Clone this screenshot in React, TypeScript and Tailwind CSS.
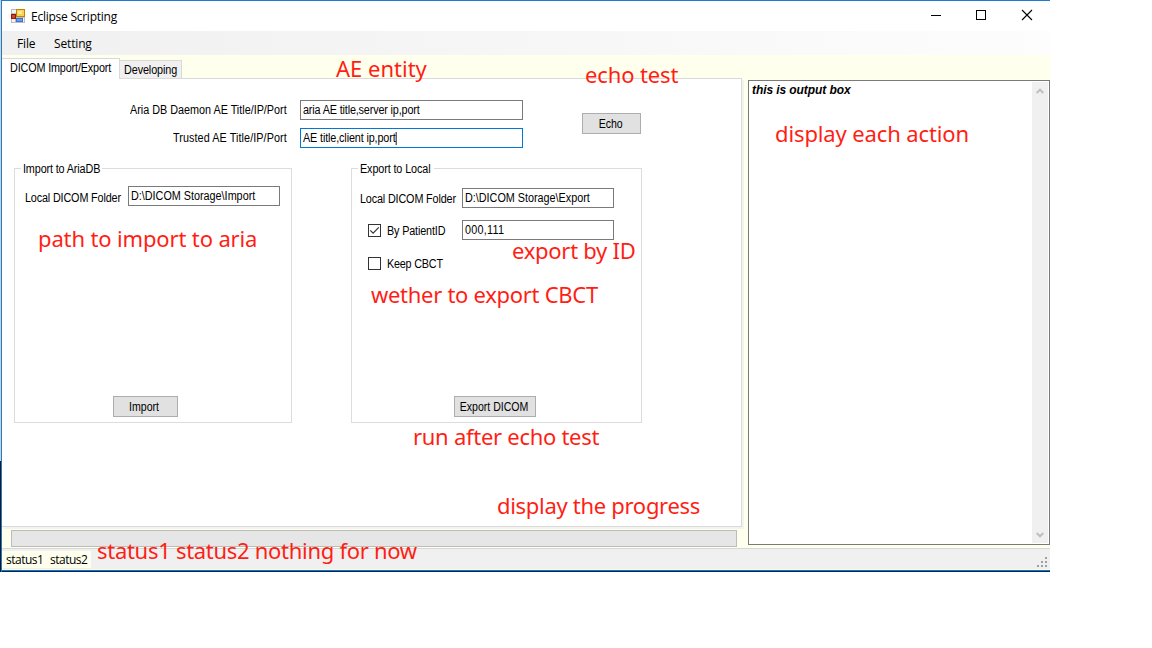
import type { ReactNode } from "react";

const ui = "inline-block origin-left scale-x-90 whitespace-pre text-[12px] leading-[14px]";

function Field({ value, className, focused = false }: { value: string; className: string; focused?: boolean }) {
  return (
    <div className={`flex h-5 shrink-0 items-center border bg-white pl-[2px] ${focused ? "border-[#0078d7]" : "border-[#7a7a7a]"} ${className}`}>
      <span className={ui}>
        {value}
        {focused && <i className="inline-block h-[13px] w-[1.2px] bg-black align-middle" />}
      </span>
    </div>
  );
}

function Button({ className, children }: { className: string; children: ReactNode }) {
  return (
    <button className={`flex h-[21px] shrink-0 items-center justify-center border border-[#adadad] bg-[#e1e1e1] pr-[2px] ${className}`}>
      <span className="inline-block scale-x-[0.88] whitespace-pre text-[12px] leading-[14px]">{children}</span>
    </button>
  );
}

function Check({ checked = false }: { checked?: boolean }) {
  return (
    <div className="h-[13px] w-[13px] shrink-0 border border-[#333] bg-white">
      {checked && (
        <svg width="11" height="11" viewBox="0 0 11 11" fill="none" stroke="#333" strokeWidth="1.2">
          <path d="M1.3 5.3 4.1 8.1 9.8 2.4" />
        </svg>
      )}
    </div>
  );
}

function Note({ className, children }: { className: string; children: ReactNode }) {
  return (
    <span className={`absolute whitespace-pre font-['Noto_Sans',sans-serif] text-[22px] leading-[30px] text-[#ff1e14] ${className}`}>
      {children}
    </span>
  );
}

function TitleBar() {
  return (
    <header className="flex h-[30px] shrink-0 items-center bg-white font-['Open_Sans',sans-serif] text-[12px]">
      <svg className="ml-[9px] shrink-0" width="14" height="14" viewBox="0 0 14 14">
        <rect width="14" height="14" fill="#bdbdbd" />
        <path d="M1 1h4v3H1zM1 10h3v3H1zM12 9h1v4h-1z" fill="#f4f4f4" />
        <rect x="5.500" y="0.500" width="8" height="7" fill="#ffd04a" stroke="#b8860b" />
        <rect x="7" y="2" width="4" height="3" fill="#ffe9a0" />
        <rect x="0.500" y="5.500" width="4" height="4" fill="#d4422a" stroke="#8e1b10" />
        <rect x="5.500" y="9.500" width="6" height="3" fill="#6e9ff0" stroke="#3b6fd0" />
      </svg>
      <span className="mt-px ml-[6px] flex-1 tracking-[-0.25px]">Eclipse Scripting</span>
      <svg width="120" height="30" viewBox="0 0 120 30" fill="none" stroke="#000" shapeRendering="crispEdges">
        <path d="M1 14.500h10" />
        <rect x="46.500" y="9.500" width="9" height="9" />
        <path d="M92 9l10 10M102 9 92 19" shapeRendering="auto" strokeWidth="1.1" />
      </svg>
    </header>
  );
}

function ImportGroup() {
  return (
    <section className="flex h-[255px] w-[278px] flex-col border border-[#dcdcdc]">
      <h2 className="-mt-[7px] ml-[6px] h-[14px] w-[81px] bg-white pl-[2px] leading-[14px]">
        <span className={`${ui} tracking-[-0.14px]`}>Import to AriaDB</span>
      </h2>
      <div className="mt-[10px] flex">
        <label className="ml-[10px] w-[103px] pt-[5px] leading-[14px]">
          <span className={`${ui} tracking-[-0.16px]`}>Local DICOM Folder</span>
        </label>
        <Field value="D:\DICOM Storage\Import" className="w-[152px]" />
      </div>
      <Button className="mt-auto mb-[5px] ml-[98px] w-[65px]">Import</Button>
    </section>
  );
}

function ExportGroup() {
  return (
    <section className="ml-[59px] flex h-[255px] w-[291px] flex-col border border-[#dcdcdc]">
      <h2 className="-mt-[7px] ml-[6px] h-[14px] w-[76px] bg-white pl-[2px] leading-[14px]">
        <span className={`${ui} tracking-[-0.12px]`}>Export to Local</span>
      </h2>
      <div className="mt-[12px] flex">
        <label className="ml-[8px] w-[102px] pt-[4px] leading-[14px]">
          <span className={`${ui} tracking-[-0.16px]`}>Local DICOM Folder</span>
        </label>
        <Field value="D:\DICOM Storage\Export" className="w-[152px]" />
      </div>
      <div className="mt-3 flex items-center pl-4">
        <Check checked />
        <label className="ml-[6px] w-[75px] pt-px leading-[14px]">
          <span className={`${ui} tracking-[-0.16px]`}>By PatientID</span>
        </label>
        <Field value="000,111" className="w-[152px] tracking-[0.3px]" />
      </div>
      <div className="mt-[16px] flex h-[14px] items-center pl-4">
        <Check />
        <label className="ml-[6px] pt-px leading-[14px]">
          <span className={`${ui} tracking-[-0.22px]`}>Keep CBCT</span>
        </label>
      </div>
      <Button className="mt-auto mb-[5px] ml-[102px] w-[82px]">Export DICOM</Button>
    </section>
  );
}

function Tabs() {
  return (
    <div className="flex w-[742px] shrink-0 flex-col">
      <div className="z-10 -mb-px flex h-[24px] shrink-0 items-end">
        <div className="mt-[3px] h-[21px] w-[118px] border-t border-r border-[#d9d9d9] bg-white pt-[2px] pl-[8px] leading-[14px]">
          <span className={`${ui} tracking-[-0.16px]`}>DICOM Import/Export</span>
        </div>
        <div className="h-[19px] w-[62px] border-t border-r border-b border-[#d9d9d9] bg-[#f0f0f0] pt-[2px] pl-[4px] leading-[14px]">
          <span className={`${ui} tracking-[-0.1px]`}>Developing</span>
        </div>
      </div>
      <div className="flex h-[449px] w-[740px] shrink-0 flex-col border-t border-r border-b border-[#d9d9d9] bg-white shadow-[2px_2px_0_#f3f3f0]">
        <div className="flex h-[89px] shrink-0">
          <div className="flex w-[521px] flex-col gap-2 pt-[21px]">
            <div className="flex items-center">
              <label className="w-[298px] pl-[128px] leading-[14px]">
                <span className={ui}>Aria DB Daemon AE Title/IP/Port</span>
              </label>
              <Field value="aria AE title,server ip,port" className="w-[223px] tracking-[-0.16px]" />
            </div>
            <div className="flex items-center">
              <label className="w-[298px] pl-[171px] leading-[14px]">
                <span className={`${ui} tracking-[0.09px]`}>Trusted AE Title/IP/Port</span>
              </label>
              <Field value="AE title,client ip,port" className="w-[223px] tracking-[-0.14px]" focused />
            </div>
          </div>
          <Button className="mt-[34px] ml-[59px] w-[59px]">Echo</Button>
        </div>
        <div className="flex pl-3">
          <ImportGroup />
          <ExportGroup />
        </div>
      </div>
      <div className="mt-[3px] ml-[9px] h-[17px] w-[726px] shrink-0 border border-[#bcbcbc] bg-[#e6e6e6]" />
    </div>
  );
}

function OutputBox() {
  return (
    <div className="mt-[25px] ml-[4px] flex h-[465px] w-[302px] shrink-0 justify-between border border-[#7a7a7a] bg-white p-px">
      <p className="pt-[1px] pl-[2px] text-[12px] leading-[14px] font-bold tracking-[-0.08px] italic">this is output box</p>
      <div className="flex h-full w-4 flex-col items-center justify-between bg-[#f0f0f0] py-[5px] pr-px">
        <svg width="8" height="8" viewBox="0 0 8 8" fill="none" stroke="#bfbfbf" strokeWidth="2">
          <path d="M.7 6 4 2.700 7.300 6" />
        </svg>
        <svg width="8" height="8" viewBox="0 0 8 8" fill="none" stroke="#bfbfbf" strokeWidth="2">
          <path d="M.7 3 4 6.300 7.300 3" />
        </svg>
      </div>
    </div>
  );
}

export default function App() {
  return (
    <main className="relative h-[648px] w-[1152px] overflow-hidden bg-white font-['Liberation_Sans',sans-serif] text-[12px] text-black">
      <div className="flex h-[572px] w-[1050px]">
        <div className="flex w-px shrink-0 flex-col">
          <div className="h-[461px] bg-[#d0d0d0]" />
          <div className="flex-1 bg-[#151515]" />
        </div>
        <div className="flex w-[1049px] flex-col border-t border-l border-[#1a7bd0]">
          <TitleBar />
          <nav className="flex h-6 shrink-0 items-center bg-linear-to-r from-[#f0f0f0] to-[#fdfdfd] pt-px font-['Open_Sans',sans-serif] text-[12px] tracking-[-0.15px]">
            <span className="w-[37px] pl-[15px]">File</span>
            <span className="ml-[15px]">Setting</span>
          </nav>
          <div className="flex h-[493px] shrink-0 bg-[#ffffee]">
            <Tabs />
            <OutputBox />
          </div>
          <footer className="flex h-[22px] shrink-0 items-start justify-between border-t border-b border-t-[#d7d7d7] border-b-[#fafae8] bg-[#f0f0f0] font-['Open_Sans',sans-serif] text-[12px] tracking-[-0.5px]">
            <div className="mt-[2px] flex h-[17px] w-[89px] items-center bg-[#ffffee] pl-[4px]">
              <span className="w-[44px]">status1</span>
              <span>status2</span>
            </div>
            <svg className="mt-[8px] mr-[2px]" width="11" height="11" fill="#a0a0a0">
              <path d="M8 0h2v2H8zM4 4h2v2H4zM8 4h2v2H8zM0 8h2v2H0zM4 8h2v2H4zM8 8h2v2H8z" />
            </svg>
          </footer>
          <div className="h-px shrink-0 bg-[#0078d7]" />
          <div className="h-px shrink-0 bg-[#10243a]" />
        </div>
      </div>
      <Note className="top-[53px] left-[336px]">AE entity</Note>
      <Note className="top-[59px] left-[585px] tracking-[-0.12px]">echo test</Note>
      <Note className="top-[118px] left-[775px] tracking-[-0.12px]">display each action</Note>
      <Note className="top-[223px] left-[38px] tracking-[-0.14px]">path to import to aria</Note>
      <Note className="top-[235px] left-[512px] tracking-[-0.27px]">export by ID</Note>
      <Note className="top-[279px] left-[371px] tracking-[-0.29px]">wether to export CBCT</Note>
      <Note className="top-[421px] left-[413px] tracking-[-0.28px]">run after echo test</Note>
      <Note className="top-[490px] left-[497px] tracking-[-0.3px]">display the progress</Note>
      <Note className="top-[535px] left-[97px] tracking-[-0.29px]">status1 status2 nothing for now</Note>
    </main>
  );
}
